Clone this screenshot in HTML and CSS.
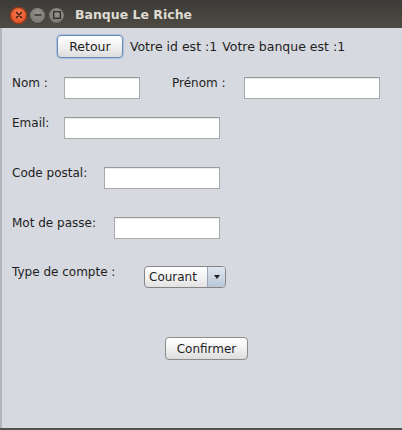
FILE: index.html
```html
<!DOCTYPE html>
<html>
<head>
<meta charset="utf-8">
<link rel="stylesheet" href="styles.css">
</head>
<body>
<div class="window">
  <div class="titlebar">
    <div class="controls">
      <span class="wbtn close"><svg width="16" height="16" viewBox="0 0 16 16"><path d="M5.5 5.5 L10.5 10.5 M10.5 5.5 L5.5 10.5" stroke="#3a1a10" stroke-width="1.4" stroke-linecap="round"/></svg></span>
      <span class="wbtn"><svg width="16" height="16" viewBox="0 0 16 16"><path d="M4.5 8 H11.5" stroke="#2e2d2a" stroke-width="1.4"/></svg></span>
      <span class="wbtn"><svg width="16" height="16" viewBox="0 0 16 16"><rect x="4.7" y="4.7" width="6.6" height="6.6" fill="none" stroke="#2e2d2a" stroke-width="1.3"/></svg></span>
    </div>
    <div class="title">Banque Le Riche</div>
  </div>
  <div class="content">
    <div class="topbar">
      <button class="btn btn-focus">Retour</button>
      <span class="txt txt-id">Votre id est :1</span>
      <span class="txt">Votre banque est :1</span>
    </div>
    <div class="row row-nom">
      <span class="lbl w-nom">Nom :</span>
      <span class="field f-nom"></span>
      <span class="lbl w-prenom">Prénom :</span>
      <span class="field f-prenom"></span>
    </div>
    <div class="row row-email">
      <span class="lbl w-nom">Email:</span>
      <span class="field f-email"></span>
    </div>
    <div class="row row-cp">
      <span class="lbl w-cp">Code postal:</span>
      <span class="field f-cp"></span>
    </div>
    <div class="row row-mdp">
      <span class="lbl w-mdp">Mot de passe:</span>
      <span class="field f-mdp"></span>
    </div>
    <div class="row row-type">
      <span class="lbl w-type">Type de compte :</span>
      <span class="combo"><span class="combo-val">Courant</span><span class="combo-arrow"><svg width="8" height="6" viewBox="0 0 8 6"><path d="M1 1 H7 L4 5 Z" fill="#1e1e1e"/></svg></span></span>
    </div>
    <div class="row row-confirm">
      <button class="btn btn-confirm">Confirmer</button>
    </div>
  </div>
</div>
</body>
</html>
```

FILE: styles.css
```css
html, body {
  margin: 0;
  padding: 0;
  background: #d6d9df;
}
.window {
  width: 402px;
  height: 430px;
  display: flex;
  flex-direction: column;
  font-family: "DejaVu Sans", sans-serif;
  font-size: 12px;
  color: #1e1e1e;
  overflow: hidden;
}
.titlebar {
  height: 28px;
  flex: none;
  background: linear-gradient(#3c3b37, #4e4b44);
  display: flex;
  align-items: center;
}
.controls {
  display: flex;
  gap: 2px;
  padding-left: 10px;
  margin-top: 2px;
}
.wbtn {
  width: 17px;
  height: 17px;
  border-radius: 50%;
  background: radial-gradient(circle at 50% 35%, #94928b, #6f6d67);
  box-shadow: inset 0 0 0 1px #3a3935;
  display: flex;
  align-items: center;
  justify-content: center;
}
.wbtn svg { display: block; }
.wbtn.close {
  background: radial-gradient(circle at 50% 35%, #f5794a, #d9471c);
  box-shadow: inset 0 0 0 1px #8a2f12;
}
.title {
  margin-left: 10px;
  font-family: "DejaVu Sans", sans-serif;
  font-weight: bold;
  font-size: 12.5px;
  color: #dfdbd2;
  margin-top: 1px;
}
.content {
  flex: 1;
  display: flex;
  flex-direction: column;
  box-shadow: inset 2px 0 0 #b3b5ba;
  border-bottom: 2px solid #505050;
}
.topbar {
  margin-top: 7px;
  display: flex;
  align-items: center;
  justify-content: center;
  gap: 5px;
  height: 23px;
}
.txt {
  line-height: 14px;
  font-size: 12.5px;
}
.txt-id { margin-left: 2px; }
.btn {
  font-family: "DejaVu Sans", sans-serif;
  font-size: 12px;
  color: #1e1e1e;
  height: 23px;
  border-radius: 4px;
  border: 1px solid #8c8c8c;
  background: linear-gradient(#ffffff, #f1f1f1 50%, #dcdcdc);
  padding: 0;
  margin: 0;
  box-shadow: inset 0 1px 0 #ffffff;
}
.btn-focus {
  width: 66px;
  font-size: 12.5px;
  border-color: #6c8cb8;
  box-shadow: 0 0 0 1px #a8c0de, inset 0 1px 0 #ffffff;
}
.row {
  display: flex;
  align-items: flex-start;
  padding-left: 12px;
}
.lbl {
  line-height: 14px;
  flex: none;
}
.field {
  flex: none;
  margin-top: 1px;
  height: 22px;
  box-sizing: border-box;
  background: #ffffff;
  border: 1px solid #a9a9a9;
  border-top-color: #999999;
  box-shadow: inset 0 1px 0 #ececec;
}
.w-nom { width: 52px; }
.w-prenom { width: 72px; margin-left: 32px; }
.w-cp { width: 92px; }
.w-mdp { width: 102px; }
.w-type { width: 132px; }
.f-nom { width: 76px; }
.f-prenom { width: 136px; }
.f-email { width: 156px; }
.f-cp { width: 116px; }
.f-mdp { width: 106px; }
.row-nom { margin-top: 18px; }
.row-email { margin-top: 17px; }
.row-cp { margin-top: 27px; }
.row-mdp { margin-top: 27px; }
.row-type { margin-top: 26px; }
.combo {
  margin-top: 1px;
  width: 82px;
  height: 22px;
  box-sizing: border-box;
  border: 1px solid #858585;
  border-radius: 4px;
  background: linear-gradient(#ffffff, #f3f3f3 50%, #e2e2e2);
  display: flex;
  overflow: hidden;
}
.combo-val {
  flex: 1;
  padding-left: 4px;
  line-height: 20px;
}
.combo-arrow {
  width: 17px;
  border-left: 1px solid #9aa6b4;
  background: linear-gradient(#dfe6ee, #b9c7d6);
  display: flex;
  align-items: center;
  justify-content: center;
}
.combo-arrow svg { display: block; }
.row-confirm {
  margin-top: 49px;
  padding-left: 165px;
}
.btn-confirm { width: 83px; }
```
